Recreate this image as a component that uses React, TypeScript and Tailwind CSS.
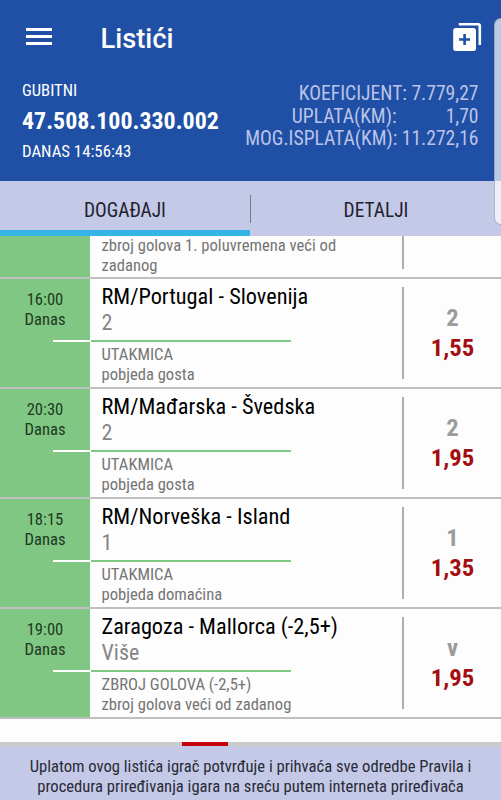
import React from 'react';

type Row = {
  time: string;
  title: string;
  pick: string;
  market: string;
  detail: string;
  tip: string;
  odds: string;
};

const rows: Row[] = [
  { time: '16:00', title: 'RM/Portugal - Slovenija', pick: '2', market: 'UTAKMICA', detail: 'pobjeda gosta', tip: '2', odds: '1,55' },
  { time: '20:30', title: 'RM/Mađarska - Švedska', pick: '2', market: 'UTAKMICA', detail: 'pobjeda gosta', tip: '2', odds: '1,95' },
  { time: '18:15', title: 'RM/Norveška - Island', pick: '1', market: 'UTAKMICA', detail: 'pobjeda domaćina', tip: '1', odds: '1,35' },
  { time: '19:00', title: 'Zaragoza - Mallorca (-2,5+)', pick: 'Više', market: 'ZBROJ GOLOVA (-2,5+)', detail: 'zbroj golova veći od zadanog', tip: 'v', odds: '1,95' },
];

function Header() {
  return (
    <header className="h-[181px] shrink-0 bg-[#1f50a5] text-white">
      <div className="flex h-[75px] items-center pl-[26px] pr-[19px]">
        <div className="mt-[-2px] flex w-[26px] flex-col gap-[4px]">
          <span className="h-[3px] bg-white" />
          <span className="h-[3px] bg-white" />
          <span className="h-[3px] bg-white" />
        </div>
        <h1 className="ml-[48.5px] grow pt-[3px] font-[Roboto,sans-serif] text-[27.3px] font-medium [font-stretch:100%]">Listići</h1>
        <svg className="mt-[-2px] h-[30px] w-[30px]" viewBox="0 0 30 30" fill="none">
          <path d="M6.8 2.2H26.2Q27.8 2.2 27.8 3.8V23" stroke="white" strokeWidth="2.6" />
          <rect x="1.2" y="6" width="22.8" height="23" rx="2.5" fill="white" />
          <path d="M12.6 12v11M7.1 17.5h11" stroke="#1f50a5" strokeWidth="2.6" />
        </svg>
      </div>
      <div className="flex justify-between pl-[22px] pr-[22.5px]">
        <div className="flex flex-col pt-[5px]">
          <span className="text-[16.6px] leading-[22px]">GUBITNI</span>
          <span className="mt-[4px] text-[23.9px] font-bold leading-[30px]">47.508.100.330.002</span>
          <span className="mt-[4px] text-[16.8px] leading-[22px]">DANAS 14:56:43</span>
        </div>
        <div className="mt-[7px] flex flex-col text-right text-[19.6px] leading-[23px] text-[#bcc3ea]">
          <span>KOEFICIJENT: 7.779,27</span>
          <span className="flex justify-end">
            <span>UPLATA(KM):</span>
            <span className="w-[82px]">1,70</span>
          </span>
          <span className="-mt-px">MOG.ISPLATA(KM): 11.272,16</span>
        </div>
      </div>
    </header>
  );
}

function Tabs() {
  return (
    <nav className="flex h-[55px] shrink-0 bg-[#c5c9e8] text-[19.4px] text-[#20222c]">
      <div className="flex w-[250px] flex-col">
        <span className="flex h-[49px] items-center justify-center pt-[10px]">DOGAĐAJI</span>
        <span className="h-[6px] bg-[#33b5e5]" />
      </div>
      <span className="mt-[14px] h-[28px] w-px bg-[#77798a]" />
      <span className="flex h-[49px] grow items-center justify-center pt-[10px]">DETALJI</span>
    </nav>
  );
}

function EventRow({ row }: { row: Row }) {
  return (
    <div className="flex h-[110px] shrink-0 border-b-2 border-[#bfbfbf]">
      <div className="flex w-[90px] flex-col bg-[#81c784] text-center text-[16.6px] leading-[20px] text-[#1d3a20]">
        <span className="mt-[11px]">{row.time}</span>
        <span>Danas</span>
        <span className="ml-auto mt-[10px] h-[2px] w-[37px] bg-white" />
      </div>
      <div className="flex w-[312px] flex-col text-[16.6px] leading-[20px] text-[#757575]">
        <span className="ml-[11.5px] mt-[4px] whitespace-nowrap text-[22.3px] leading-[27px] text-black">{row.title}</span>
        <span className="ml-[11.5px] h-[30px] text-[22px] leading-[26px] text-[#858585]">{row.pick}</span>
        <span className="ml-px h-[2px] w-[200px] bg-[#81c784]" />
        <span className="ml-[11.5px] mt-[3px]">{row.market}</span>
        <span className="ml-[11.5px]">{row.detail}</span>
      </div>
      <span className="mt-[8px] h-[92px] w-[2px] bg-[#adadad]" />
      <div className="flex grow flex-col pt-[24px] text-center text-[24.7px] font-bold leading-[29.5px]">
        <span className="text-[#9b9b9b]">{row.tip}</span>
        <span className="text-[#a40e12]">{row.odds}</span>
      </div>
    </div>
  );
}

export default function App() {
  return (
    <div className="relative flex h-[800px] w-[501px] flex-col overflow-hidden bg-[#fdfdfd] font-['Roboto_Condensed',Roboto,sans-serif] [font-stretch:75%]">
      <Header />
      <Tabs />
      <div className="flex h-[43px] shrink-0 border-b-2 border-[#bfbfbf]">
        <div className="w-[90px] bg-[#81c784]" />
        <div className="w-[312px] pl-[11.5px] text-[16.6px] leading-[20px] text-[#757575]">
          <p>zbroj golova 1. poluvremena veći od<br />zadanog</p>
        </div>
        <span className="h-[33px] w-[2px] bg-[#adadad]" />
      </div>
      {rows.map((row) => <EventRow key={row.time} row={row} />)}
      <div className="mt-auto flex h-[4px] shrink-0 bg-[#c9cbcb]">
        <span className="ml-[182px] w-[46px] bg-[#c4000b]" />
      </div>
      <footer className="h-[54px] shrink-0 bg-[#c5c9e8] pt-[11px] text-center text-[16.6px] leading-[20px] text-[#292b36]">
        Uplatom ovog listića igrač potvrđuje i prihvaća sve odredbe Pravila i<br />
        procedura priređivanja igara na sreću putem interneta priređivača
      </footer>
      <div className="absolute left-[494px] top-[18px] h-[207px] w-[14px] rounded-[8px] border border-[#8790b0]/60 bg-white/70" />
    </div>
  );
}
